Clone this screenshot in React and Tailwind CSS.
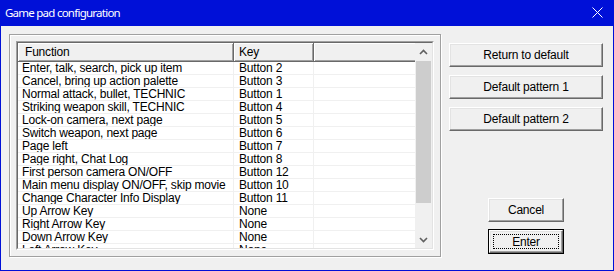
import React from "react";

const rows = [
  ["Enter, talk, search, pick up item", "Button 2"],
  ["Cancel, bring up action palette", "Button 3"],
  ["Normal attack, bullet, TECHNIC", "Button 1"],
  ["Striking weapon skill, TECHNIC", "Button 4"],
  ["Lock-on camera, next page", "Button 5"],
  ["Switch weapon, next page", "Button 6"],
  ["Page left", "Button 7"],
  ["Page right, Chat Log", "Button 8"],
  ["First person camera ON/OFF", "Button 12"],
  ["Main menu display ON/OFF, skip movie", "Button 10"],
  ["Change Character Info Display", "Button 11"],
  ["Up Arrow Key", "None"],
  ["Right Arrow Key", "None"],
  ["Down Arrow Key", "None"],
  ["Left Arrow Key", "None"],
];

function Btn({ children, className = "" }) {
  return (
    <div
      className={
        "flex items-center justify-center bg-[#f0f0f0] border border-t-white border-l-white border-r-[#696969] border-b-[#696969] shadow-[inset_-1px_-1px_0_#a0a0a0,inset_1px_1px_0_#e3e3e3] text-[12px] tracking-[-0.2px] text-black " +
        className
      }
    >
      {children}
    </div>
  );
}

function Chevron({ up }) {
  return (
    <svg width="9" height="6" viewBox="0 0 9 6">
      <path
        d={up ? "M1 5 L4.5 1.5 L8 5" : "M1 1 L4.5 4.5 L8 1"}
        fill="none"
        stroke="#606060"
        strokeWidth="1.6"
      />
    </svg>
  );
}

export default function App() {
  return (
    <div
      className="w-[614px] h-[271px] bg-[#0010d8] flex flex-col px-px pb-px overflow-hidden"
      style={{ fontFamily: '"Liberation Sans", Arial, sans-serif' }}
    >
      <div className="h-[26px] shrink-0 flex items-center justify-between pl-[4px] pr-[10px] pb-[1px] text-white">
        <span
          className="text-[11.5px] tracking-[-0.75px] leading-none"
          style={{ fontFamily: '"Noto Sans", sans-serif' }}
        >
          Game pad configuration
        </span>
        <svg width="11" height="11" viewBox="0 0 11 11">
          <path d="M0.5 0.5 L10.5 10.5 M10.5 0.5 L0.5 10.5" stroke="#fff" strokeWidth="1" />
        </svg>
      </div>
      <div className="flex-1 bg-[#f0f0f0] flex pl-[8px]">
        <div className="mt-[8px] w-[432px] h-[223px] border border-[#a0a0a0] shadow-[inset_1px_1px_0_#fff,1px_1px_0_#fff] p-[6px]">
          <div className="w-[418px] h-[209px] border border-t-[#a0a0a0] border-l-[#a0a0a0] border-r-white border-b-white">
            <div className="w-full h-full border border-t-[#696969] border-l-[#696969] border-r-[#e3e3e3] border-b-[#e3e3e3] bg-white flex overflow-hidden">
              <div className="flex-1 flex flex-col overflow-hidden text-[12px] tracking-[-0.2px] text-black">
                <div className="h-[19px] shrink-0 flex">
                  <div className="w-[216px] shrink-0 flex items-center pl-[7px] bg-[#f0f0f0] border-r border-b border-[#696969] shadow-[inset_1px_1px_0_#fff,inset_-1px_-1px_0_#a0a0a0]">
                    Function
                  </div>
                  <div className="w-[80px] shrink-0 flex items-center pl-[5px] bg-[#f0f0f0] border-r border-b border-[#696969] shadow-[inset_1px_1px_0_#fff,inset_-1px_-1px_0_#a0a0a0]">
                    Key
                  </div>
                  <div className="flex-1 bg-[#f0f0f0] border-b border-[#696969] shadow-[inset_1px_1px_0_#fff,inset_0_-1px_0_#a0a0a0]" />
                </div>
                {rows.map(([f, k]) => (
                  <div key={f} className="h-[13px] shrink-0 flex border-b border-[#f0f0f0] leading-[12px]">
                    <div className="w-[216px] shrink-0 pl-[4px] border-r border-[#f0f0f0] whitespace-nowrap overflow-hidden">
                      {f}
                    </div>
                    <div className="w-[80px] shrink-0 pl-[5px] border-r border-[#f0f0f0] whitespace-nowrap">
                      {k}
                    </div>
                    <div className="flex-1" />
                  </div>
                ))}
              </div>
              <div className="w-[17px] shrink-0 bg-[#f0f0f0] flex flex-col">
                <div className="h-[18px] shrink-0 flex items-center justify-center">
                  <Chevron up />
                </div>
                <div className="h-[142px] shrink-0 mx-px bg-[#cdcdcd]" />
                <div className="flex-1" />
                <div className="h-[17px] shrink-0 flex items-center justify-center">
                  <Chevron />
                </div>
              </div>
            </div>
          </div>
        </div>
        <div className="ml-[8px] w-[154px] pt-[17px] flex flex-col items-center">
          <Btn className="w-[154px] h-[24px]">Return to default</Btn>
          <Btn className="w-[154px] h-[24px] mt-[8px]">Default pattern 1</Btn>
          <Btn className="w-[154px] h-[24px] mt-[8px]">Default pattern 2</Btn>
          <Btn className="w-[76px] h-[24px] mt-[67px]">Cancel</Btn>
          <div className="w-[76px] h-[25px] mt-[7px] border border-black">
            <Btn className="w-full h-full p-[3px]">
              <div className="w-full h-full flex items-center justify-center border border-dotted border-black">
                Enter
              </div>
            </Btn>
          </div>
        </div>
      </div>
    </div>
  );
}
